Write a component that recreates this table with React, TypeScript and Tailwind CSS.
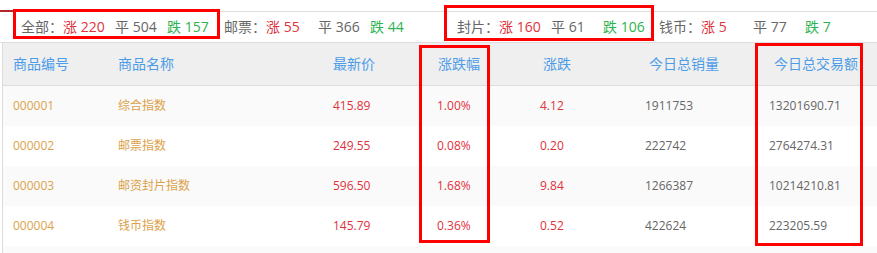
import React from "react";

const RED = "text-[#e0323c]";
const GREEN = "text-[#2bb44e]";
const GRAY = "text-[#666666]";

const groups = [
  { label: "全部：", up: 220, flat: 504, down: 157, w: "w-[203px]" },
  { label: "邮票：", up: 55, flat: 366, down: 44, w: "w-[233px]" },
  { label: "封片：", up: 160, flat: 61, down: 106, w: "w-[202px]" },
  { label: "钱币：", up: 5, flat: 77, down: 7, w: "w-[200px]" },
];

const cols = [
  { title: "商品编号", w: "w-[105px]", hp: "pl-[10px]" },
  { title: "商品名称", w: "w-[215px]", hp: "pl-[10px]" },
  { title: "最新价", w: "w-[104px]", hp: "pl-[10px]" },
  { title: "涨跌幅", w: "w-[103px]", hp: "pl-[11px]" },
  { title: "涨跌", w: "w-[105px]", hp: "pl-[13px]" },
  { title: "今日总销量", w: "w-[124px]", hp: "pl-[14px]" },
  { title: "今日总交易额", w: "flex-1", hp: "pl-[15px]" },
];

const rows = [
  ["000001", "综合指数", "415.89", "1.00%", "4.12", "1911753", "13201690.71"],
  ["000002", "邮票指数", "249.55", "0.08%", "0.20", "222742", "2764274.31"],
  ["000003", "邮资封片指数", "596.50", "1.68%", "9.84", "1266387", "10214210.81"],
  ["000004", "钱币指数", "145.79", "0.36%", "0.52", "422624", "223205.59"],
];

const cellColor = [
  "text-[#dca24a]",
  "text-[#dca24a]",
  RED,
  RED,
  RED,
  GRAY,
  GRAY,
];

export default function App() {
  return (
    <div
      className="relative w-[877px] h-[253px] overflow-hidden bg-white"
      style={{ fontFamily: '"Open Sans", "Noto Sans CJK SC", sans-serif' }}
    >
      {/* top tab line */}
      <div className="h-[10px]" />
      <div className="flex h-[2px]">
        <div className="w-[13px] h-[2px] bg-[#b3272c]" />
        <div className="flex-1 h-[2px] border-b border-[#dddddd]" />
      </div>

      {/* summary line */}
      <div className="flex items-center h-[31px] pl-[21px] border-b border-[#dddddd] text-[14px] leading-none">
        {groups.map((g) => (
          <div key={g.label} className={`flex items-center shrink-0 ${g.w}`}>
            <span className={`w-[42px] ${GRAY}`}>{g.label}</span>
            <span className={`w-[52px] ${RED}`}>涨 {g.up}</span>
            <span className={`w-[52px] ${GRAY}`}>平 {g.flat}</span>
            <span className={`w-[52px] ${GREEN}`}>跌 {g.down}</span>
          </div>
        ))}
      </div>

      {/* table */}
      <div className="ml-[2px] border-l border-[#dddddd]">
        <div className="flex items-center h-[43px] bg-[#efefef] border-b border-[#dddddd] text-[14px] text-[#4d9ce8] leading-none">
          {cols.map((c) => (
            <div key={c.title} className={`${c.w} ${c.hp} shrink-0`}>
              {c.title}
            </div>
          ))}
        </div>
        {rows.map((r, i) => (
          <div
            key={r[0]}
            className={`flex items-center h-[40px] text-[12px] leading-none ${
              i % 2 === 0 ? "bg-[#fafafa]" : "bg-white"
            }`}
          >
            {r.map((v, j) => (
              <div key={j} className={`${cols[j].w} pl-[10px] shrink-0 ${cellColor[j]}`}>
                {v}
              </div>
            ))}
          </div>
        ))}
        <div className="h-[40px] bg-[#fafafa]" />
      </div>

      {/* red annotation boxes */}
      <div className="absolute left-[13px] top-[9px] w-[207px] h-[30px] border-[3px] border-[#ff0000]" />
      <div className="absolute left-[444px] top-[5px] w-[210px] h-[36px] border-[3px] border-[#ff0000]" />
      <div className="absolute left-[419px] top-[45px] w-[71px] h-[198px] border-[3px] border-[#ff0000]" />
      <div className="absolute left-[755px] top-[43px] w-[108px] h-[203px] border-[3px] border-[#ff0000]" />
    </div>
  );
}
